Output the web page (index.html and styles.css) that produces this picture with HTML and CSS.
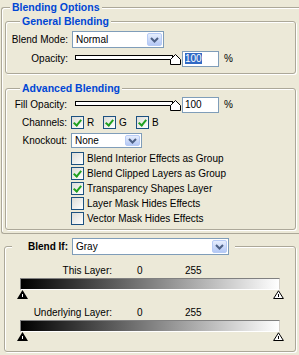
FILE: index.html
```html
<!DOCTYPE html>
<html lang="en">
<head>
    <meta charset="UTF-8">
    <meta name="viewport" content="width=device-width, initial-scale=1.0">
    <title>Blending Options</title>
    <link rel="stylesheet" href="styles.css">
</head>
<body>
    <div class="group options">
        <span class="legend">Blending Options</span>

        <div class="group general">
            <span class="legend">General Blending</span>
            <div class="row">
                <label class="lbl">Blend Mode:</label>
                <div class="combo mode"><span>Normal</span><i class="drop"><svg width="9" height="6" viewBox="0 0 9 6"><polyline points="1,1 4.5,4.5 8,1" fill="none" stroke="#4D6185" stroke-width="2"/></svg></i></div>
            </div>
            <div class="row second">
                <label class="lbl">Opacity:</label>
                <svg class="slider" width="106" height="11" viewBox="0 0 106 11"><rect x="0.5" y="1.5" width="97" height="4" fill="#fff" stroke="#000"/><polygon points="100.5,0.5 105.5,5.5 105.5,10.5 95.5,10.5 95.5,5.5" fill="#fff" stroke="#000"/></svg>
                <div class="field"><span class="sel">100</span></div>
                <span class="pct">%</span>
            </div>
        </div>

        <div class="group advanced">
            <span class="legend">Advanced Blending</span>
            <div class="row">
                <label class="lbl">Fill Opacity:</label>
                <svg class="slider" width="106" height="11" viewBox="0 0 106 11"><rect x="0.5" y="1.5" width="97" height="4" fill="#fff" stroke="#000"/><polygon points="100.5,0.5 105.5,5.5 105.5,10.5 95.5,10.5 95.5,5.5" fill="#fff" stroke="#000"/></svg>
                <div class="field"><span>100</span></div>
                <span class="pct">%</span>
            </div>
            <div class="row next">
                <label class="lbl">Channels:</label>
                <div class="chan"><i class="check on"></i>R</div>
                <div class="chan wide"><i class="check on"></i>G</div>
                <div class="chan"><i class="check on"></i>B</div>
            </div>
            <div class="row next">
                <label class="lbl">Knockout:</label>
                <div class="combo knock"><span>None</span><i class="drop"><svg width="9" height="6" viewBox="0 0 9 6"><polyline points="1,1 4.5,4.5 8,1" fill="none" stroke="#4D6185" stroke-width="2"/></svg></i></div>
            </div>
            <div class="opts">
                <div class="opt"><i class="check"></i>Blend Interior Effects as Group</div>
                <div class="opt"><i class="check on"></i>Blend Clipped Layers as Group</div>
                <div class="opt"><i class="check on"></i>Transparency Shapes Layer</div>
                <div class="opt"><i class="check"></i>Layer Mask Hides Effects</div>
                <div class="opt"><i class="check"></i>Vector Mask Hides Effects</div>
            </div>
        </div>
    </div>

    <div class="group blendif">
        <div class="if-row">
            <label class="lbl">Blend If:</label>
            <div class="combo gray"><span>Gray</span><i class="drop"><svg width="9" height="6" viewBox="0 0 9 6"><polyline points="1,1 4.5,4.5 8,1" fill="none" stroke="#4D6185" stroke-width="2"/></svg></i></div>
        </div>

        <div class="layer-row">
            <span class="name">This Layer:</span>
            <span class="v0">0</span>
            <span>255</span>
        </div>
        <div class="bar"></div>
        <div class="thumbs">
            <svg width="11" height="9" viewBox="0 0 11 9"><polygon points="5.5,0 11,9 0,9" fill="#000"/><line x1="5.5" y1="4" x2="5.5" y2="7" stroke="#fff"/></svg>
            <svg width="11" height="9" viewBox="0 0 11 9"><polygon points="5.5,0.8 10.4,8.5 0.6,8.5" fill="#fff" stroke="#000"/><line x1="5.5" y1="4" x2="5.5" y2="7" stroke="#000"/></svg>
        </div>

        <div class="layer-row under">
            <span class="name">Underlying Layer:</span>
            <span class="v0">0</span>
            <span>255</span>
        </div>
        <div class="bar"></div>
        <div class="thumbs">
            <svg width="11" height="9" viewBox="0 0 11 9"><polygon points="5.5,0 11,9 0,9" fill="#000"/><line x1="5.5" y1="4" x2="5.5" y2="7" stroke="#fff"/></svg>
            <svg width="11" height="9" viewBox="0 0 11 9"><polygon points="5.5,0.8 10.4,8.5 0.6,8.5" fill="#fff" stroke="#000"/><line x1="5.5" y1="4" x2="5.5" y2="7" stroke="#000"/></svg>
        </div>
    </div>
</body>
</html>
```

FILE: styles.css
```css
* { box-sizing: border-box; }
body { margin: 0; width: 299px; height: 355px; overflow: hidden; background: #ECE9D8; font: 10px "Liberation Sans", Arial, sans-serif; color: #000; }

/* group boxes */
.group { position: relative; border: 1px solid #ACA899; border-radius: 3px; box-shadow: inset 1px 1px 0 #fff, 1px 1px 0 #fff; }
.legend { position: absolute; top: -7px; left: 14px; padding: 0 2px; background: #ECE9D8; color: #0046D5; font-weight: bold; font-size: 10.5px; line-height: 13px; white-space: nowrap; }
.options { margin: 7px 0 0 1px; width: 298px; height: 227px; padding: 13px 0 0 3px; border-right: 0; border-radius: 3px 0 0 3px; box-shadow: inset 1px 1px 0 #fff; }
.options > .legend { left: 8px; }
.general { width: 291px; height: 53px; padding-top: 9px; }
.advanced { width: 291px; height: 142px; margin-top: 14px; padding-top: 7px; }
.blendif { margin: 12px 0 0 4px; width: 292px; height: 106px; }

/* rows */
.row { display: flex; align-items: center; height: 17px; }
.row.second { margin-top: 2px; }
.row.next { margin-top: 1px; }
.lbl { flex: none; width: 62px; margin-right: 4px; text-align: right; white-space: nowrap; }
.advanced .lbl { width: 61px; }

/* controls */
.combo { display: flex; align-items: center; justify-content: space-between; height: 17px; padding: 0 1px 0 3px; border: 1px solid #7F9DB9; background: #fff; }
.combo.mode { width: 92px; }
.combo.knock { width: 71px; height: 15px; }
.combo.gray { width: 157px; }
.drop { display: flex; align-items: center; justify-content: center; width: 15px; height: 13px; border: 1px solid #B7CBF5; border-radius: 2px; background: linear-gradient(#E6EEFD, #B4C8F5); }
.knock .drop { height: 11px; }
.slider { flex: none; margin: 1px 1px 0 3px; }
.advanced .slider { margin-left: 4px; }
.field { display: flex; align-items: center; width: 37px; height: 16px; padding-left: 2px; border: 1px solid #7F9DB9; background: #fff; }
.sel { background: #316AC5; color: #fff; }
.pct { margin-left: 5px; }

.check { flex: none; position: relative; width: 13px; height: 13px; margin-right: 3px; border: 1px solid #1C5180; background: linear-gradient(135deg, #DCDCD7, #fff); }
.check.on::after { content: ""; position: absolute; left: 3px; top: 1px; width: 3px; height: 6px; border: solid #21A121; border-width: 0 2px 2px 0; transform: rotate(40deg); }
.chan { display: flex; align-items: center; width: 32px; }
.chan.wide { width: 33px; }
.opts { margin-top: 2px; }
.opt { display: flex; align-items: center; height: 15px; padding-left: 65px; }

/* blend if */
.if-row { display: flex; align-items: center; width: max-content; height: 17px; margin: -9px 0 0 7px; padding-right: 6px; background: #ECE9D8; }
.if-row .lbl { width: 56px; font-weight: bold; }
.layer-row { display: flex; align-items: center; height: 13px; margin-top: 9px; }
.layer-row.under { margin-top: 7px; }
.layer-row .name { width: 107px; text-align: right; }
.layer-row .v0 { width: 48px; margin-left: 25px; }
.bar { width: 260px; height: 12px; margin: 1px 0 0 15px; border: 1px solid; border-color: #808080 #D4D0C8 #fff #808080; background: linear-gradient(to right, #000, #fff); }
.thumbs { display: flex; justify-content: space-between; width: 267px; height: 9px; margin-left: 12px; }
.thumbs svg { display: block; }
```
